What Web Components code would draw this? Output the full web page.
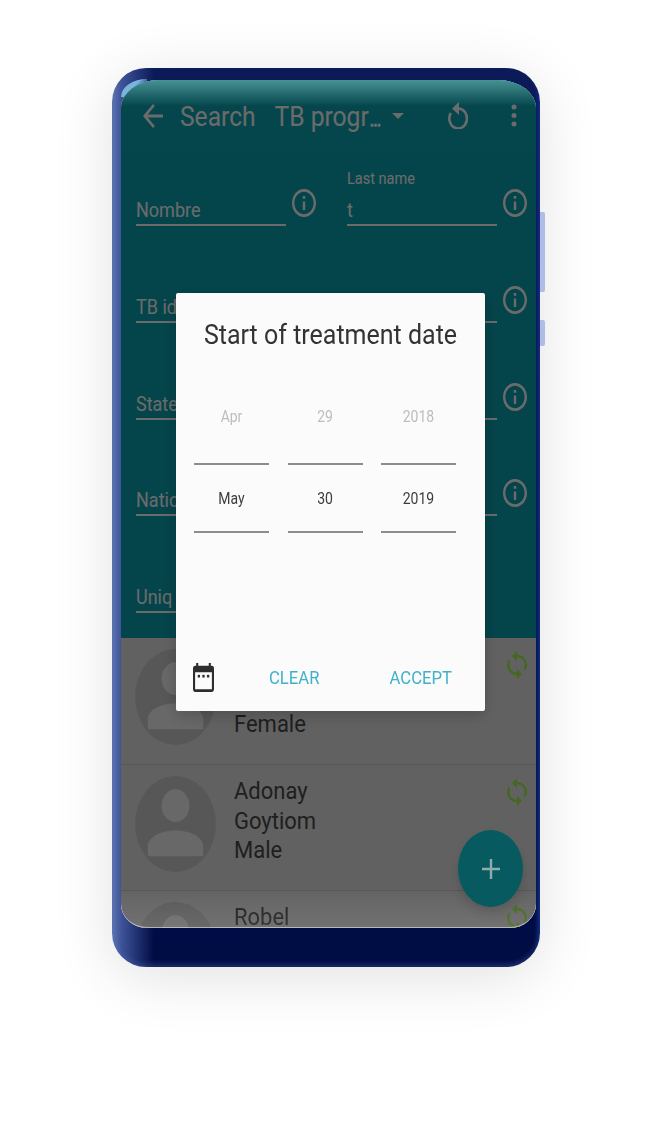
<!DOCTYPE html>
<html>
<head>
<meta charset="utf-8">
<style>
  html, body { margin: 0; background: #fff; }
  body { font-family: Roboto, "Liberation Sans", sans-serif; width: 657px; height: 1125px; overflow: hidden; }
</style>
</head>
<body>
<phone-frame>
  <app-bar></app-bar>
  <search-form>
    <form-field label="Nombre"></form-field>
    <form-field label="Last name" value="t"></form-field>
    <form-field label="TB id" no-info></form-field>
    <form-field></form-field>
    <form-field label="State" no-info></form-field>
    <form-field></form-field>
    <form-field label="Natio" no-info></form-field>
    <form-field></form-field>
    <form-field label="Uniq" no-info></form-field>
  </search-form>
  <patient-list>
    <patient-row lines="&nbsp;|&nbsp;|Female"></patient-row>
    <patient-row lines="Adonay|Goytiom|Male"></patient-row>
    <patient-row lines="Robel"></patient-row>
  </patient-list>
  <add-fab slot="over"></add-fab>
  <date-dialog slot="over" title="Start of treatment date"></date-dialog>
</phone-frame>

<script>
// material icons, stretched: the whole reference is a bit taller than wide
const infoIcon = `<svg viewBox="2 2 20 20" width="24" height="28" preserveAspectRatio="none" fill="currentColor"><path d="M11 7h2v2h-2zm0 4h2v6h-2zm1-9C6.48 2 2 6.48 2 12s4.48 10 10 10 10-4.48 10-10S17.52 2 12 2zm0 18c-4.41 0-8-3.59-8-8s3.59-8 8-8 8 3.59 8 8-3.59 8-8 8z"/></svg>`;

class PhoneFrame extends HTMLElement {
  connectedCallback() {
    this.attachShadow({ mode: 'open' });
    this.shadowRoot.innerHTML = `
      <style>
        :host {
          display: block;
          position: relative;
          box-sizing: border-box;
          width: 428px;
          height: 899px;
          margin: 68px 0 0 112px;
          padding: 12px 4px 39px 9px;
          border-radius: 34px;
          background:
            linear-gradient(90deg, #6076b2 0, #3f5499 9px, rgba(20,40,110,0) 42px),
            linear-gradient(270deg, #0b2070 0, rgba(11,32,112,0) 6px),
            linear-gradient(180deg, #0c1a58 0, #001150 50%, #000c44 100%);
          box-shadow: 0 10px 60px rgba(0,0,0,.12), inset 0 -3px 5px rgba(80,110,190,.35);
        }
        .btn { position: absolute; left: 428px; width: 5px; background: #aebce6; border-radius: 0 2px 2px 0; }
        .b1 { top: 144px; height: 80px; }
        .b2 { top: 252px; height: 26px; }
        .sliver { position: absolute; left: 9px; top: 11px; width: 26px; height: 18px; border-radius: 26px 0 0 0 / 18px 0 0 0; background: linear-gradient(135deg, #7ab4dc 45%, rgba(122,180,220,0) 75%); }
        .screen {
          position: relative;
          height: 100%;
          display: flex;
          flex-direction: column;
          overflow: hidden;
          border-radius: 38px 38px 26px 26px / 28px 28px 24px 24px;
          background: #fff;
          color: #fff;
          filter: blur(.5px);
        }
        .scrim { position: absolute; inset: 0; background: rgba(0,0,0,.58); pointer-events: none; }
        .gloss {
          position: absolute; left: 0; right: 0; top: 0; height: 26px;
          background: linear-gradient(180deg, rgba(140,220,220,.5), rgba(140,220,220,0));
        }
        .foot {
          position: absolute; left: 0; right: 0; bottom: 0; height: 40px;
          border-bottom: 1px solid rgba(255,255,255,.55);
          border-radius: 0 0 26px 26px / 0 0 24px 24px;
          background: linear-gradient(180deg, rgba(255,255,255,0), rgba(255,255,255,.1));
        }
      </style>
      <div class="btn b1"></div>
      <div class="btn b2"></div>
      <div class="sliver"></div>
      <div class="screen">
        <slot></slot>
        <div class="scrim"></div>
        <div class="gloss"></div>
        <div class="foot"></div>
        <slot name="over"></slot>
      </div>
    `;
  }
}

class AppBar extends HTMLElement {
  connectedCallback() {
    this.attachShadow({ mode: 'open' });
    this.shadowRoot.innerHTML = `
      <style>
        :host {
          display: flex;
          align-items: center;
          height: 72px;
          padding: 0 0 0 22px;
          font-size: 24.600px;
          color: #fff;
          background: #0ba8b4;
          flex: none;
        }
        svg { display: block; flex: none; }
        span { display: inline-block; transform: scaleY(1.12); }
        .title { margin-left: 17px; }
        .prog { margin-left: 19px; white-space: nowrap; }
        .dots { letter-spacing: -3px; }
        .caret { margin-left: 13px; width: 0; height: 0; border: 6px solid transparent; border-top: 6px solid #fff; border-bottom: 0; transform: none; }
        .refresh { margin-left: 44px; margin-top: -1px; }
        .more { margin-left: 43px; }
      </style>
      <svg width="20" height="24" viewBox="4 4 16 16" preserveAspectRatio="none" fill="currentColor"><path d="M20 11H7.830l5.590-5.590L12 4l-8 8 8 8 1.410-1.410L7.830 13H20v-2z"/></svg>
      <span class="title">Search</span>
      <span class="prog">TB progr<span class="dots">...</span></span>
      <span class="caret"></span>
      <svg class="refresh" width="20" height="27" viewBox="0 0 20 27"><path d="M10 6.500A8.800 10 0 1 1 2.800 11" fill="none" stroke="currentColor" stroke-width="2.600"/><path d="M11 0 4 6.500 11 13Z" fill="currentColor"/></svg>
      <svg class="more" width="6" height="24" viewBox="0 0 6 24" fill="currentColor"><circle cx="3" cy="3" r="2.500"/><circle cx="3" cy="11.500" r="2.500"/><circle cx="3" cy="20" r="2.500"/></svg>
    `;
  }
}

class SearchForm extends HTMLElement {
  connectedCallback() {
    this.attachShadow({ mode: 'open' });
    this.shadowRoot.innerHTML = `
      <style>
        :host {
          display: grid;
          grid-template-columns: 150px 150px;
          grid-auto-rows: 96.750px;
          column-gap: 61px;
          align-content: start;
          flex: none;
          height: 486px;
          padding-left: 15px;
          background: #0ba4b2;
          box-sizing: border-box;
        }
      </style>
      <slot></slot>
    `;
  }
}

class FormField extends HTMLElement {
  connectedCallback() {
    const label = this.getAttribute('label');
    const value = this.getAttribute('value');
    this.attachShadow({ mode: 'open' });
    this.shadowRoot.innerHTML = `
      <style>
        :host { display: flex; flex-direction: column; justify-content: flex-end; position: relative; height: 74px; color: #fff; }
        .float { font-size: 14.500px; line-height: 18px; position: absolute; top: 19px; left: 0; transform: scaleY(1.12); transform-origin: left center; }
        .input { font-size: 18px; line-height: 24px; height: 26px; border-bottom: 2px solid #fff; }
        .input span { display: inline-block; transform: scaleY(1.12); }
        .info { position: absolute; left: 156px; top: 37px; }
        svg { display: block; }
      </style>
      ${value ? `<div class="float">${label}</div>` : ''}
      <div class="input"><span>${value || label || ''}</span></div>
      ${this.hasAttribute('no-info') ? '' : `<div class="info">${infoIcon}</div>`}
    `;
  }
}

class PatientList extends HTMLElement {
  connectedCallback() {
    this.attachShadow({ mode: 'open' });
    this.shadowRoot.innerHTML = `
      <style>
        :host { display: block; flex: 1; min-height: 0; overflow: hidden; background: #e8e8e8; }
      </style>
      <slot></slot>
    `;
  }
}

class PatientRow extends HTMLElement {
  connectedCallback() {
    const lines = this.getAttribute('lines').split('|');
    this.attachShadow({ mode: 'open' });
    this.shadowRoot.innerHTML = `
      <style>
        :host {
          display: flex;
          box-sizing: border-box;
          height: 126.500px;
          padding: 11px 9px 0 14px;
          border-bottom: 1px solid #cecece;
          color: #4a4a4a;
        }
        .avatar { flex: none; display: block; }
        .text { margin-left: 18px; flex: 1; display: flex; flex-direction: column; gap: 10.800px; padding-top: 5.400px; font-size: 22px; line-height: 19px; }
        .text div { transform: scaleY(1.12); transform-origin: left center; }
        .sync { flex: none; margin-top: 2px; color: #a6f54a; }
      </style>
      <svg class="avatar" width="81" height="96" viewBox="0 0 82 97" preserveAspectRatio="none">
        <ellipse cx="41" cy="48.500" rx="41" ry="48.500" fill="#d0d0d0"/>
        <ellipse cx="41" cy="30" rx="14" ry="16.500" fill="#f8f8f8"/>
        <path d="M13 81V71c0-10 14-16 28-16s28 6 28 16v10c-8 0-48 0-56 0Z" fill="#f8f8f8"/>
      </svg>
      <div class="text">${lines.map(l => `<div>${l}</div>`).join('')}</div>
      <svg class="sync" width="20" height="28" viewBox="4 1 16 22" preserveAspectRatio="none" fill="currentColor"><path d="M12 4V1L8 5l4 4V6c3.310 0 6 2.690 6 6 0 1.010-.25 1.970-.7 2.800l1.460 1.460C19.540 15.030 20 13.570 20 12c0-4.420-3.580-8-8-8zm0 14c-3.310 0-6-2.690-6-6 0-1.010.25-1.970.7-2.800L5.240 7.740C4.460 8.970 4 10.430 4 12c0 4.420 3.580 8 8 8v3l4-4-4-4v3z"/></svg>
    `;
  }
}

class AddFab extends HTMLElement {
  connectedCallback() {
    this.attachShadow({ mode: 'open' });
    this.shadowRoot.innerHTML = `
      <style>
        :host {
          position: absolute;
          left: 337px;
          top: 750px;
          width: 65px;
          height: 77px;
          border-radius: 50%;
          display: flex;
          align-items: center;
          justify-content: center;
          background: #065a60;
          box-shadow: 0 5px 12px rgba(0,0,0,.16);
        }
        svg { display: block; }
      </style>
      <svg width="18" height="20" viewBox="0 0 18 20" stroke="#8fabad" stroke-width="2.400"><path d="M9 0v20M0 10h18"/></svg>
    `;
  }
}

class DateWheel extends HTMLElement {
  connectedCallback() {
    const prev = this.getAttribute('prev');
    const cur = this.getAttribute('cur');
    this.attachShadow({ mode: 'open' });
    this.shadowRoot.innerHTML = `
      <style>
        :host { display: block; width: 75px; font-size: 14px; text-align: center; }
        .row { display: flex; align-items: center; justify-content: center; border-bottom: 2px solid #8c8c8c; box-sizing: border-box; }
        .row span { display: inline-block; transform: scaleY(1.15); }
        .prev { height: 88px; color: #bdbdbd; padding-bottom: 8px; }
        .cur { height: 68px; color: #3d3d3d; }
      </style>
      <div class="row prev"><span>${prev}</span></div>
      <div class="row cur"><span>${cur}</span></div>
    `;
  }
}
customElements.define('date-wheel', DateWheel);

class DateDialog extends HTMLElement {
  connectedCallback() {
    this.attachShadow({ mode: 'open' });
    this.shadowRoot.innerHTML = `
      <style>
        :host {
          position: absolute;
          left: 55px;
          top: 213px;
          width: 309px;
          height: 418px;
          box-sizing: border-box;
          display: flex;
          flex-direction: column;
          background: #fbfbfb;
          border-radius: 2px;
          box-shadow: 0 5px 16px rgba(0,0,0,.2);
          color: #333;
        }
        h2 { margin: 0; padding-top: 25px; height: 52px; font-weight: 400; font-size: 25px; line-height: 34px; text-align: center; transform: scaleY(1.1); transform-origin: center 42px; }
        .wheels { display: flex; gap: 18.500px; padding: 7px 0 0 18px; }
        .actions { margin-top: auto; height: 68px; display: flex; align-items: center; padding: 0 33px 0 17px; color: #3fb2c9; font-size: 16.700px; }
        .actions svg { display: block; flex: none; color: #2d2d2d; }
        .actions span { display: inline-block; transform: scaleY(1.15); }
        .clear { margin-left: 55px; }
        .accept { margin-left: auto; }
      </style>
      <h2>${this.getAttribute('title')}</h2>
      <div class="wheels">
        <date-wheel prev="Apr" cur="May"></date-wheel>
        <date-wheel prev="29" cur="30"></date-wheel>
        <date-wheel prev="2018" cur="2019"></date-wheel>
      </div>
      <div class="actions">
        <svg width="21" height="29" viewBox="2 1 20 22" preserveAspectRatio="none" fill="currentColor"><path d="M20 3h-1V1h-2v2H7V1H5v2H4c-1.100 0-2 .9-2 2v16c0 1.100.9 2 2 2h16c1.100 0 2-.9 2-2V5c0-1.100-.9-2-2-2zm0 18H4V8h16v13z"/><rect x="6.500" y="10" width="2.200" height="2"/><rect x="10.900" y="10" width="2.200" height="2"/><rect x="15.300" y="10" width="2.200" height="2"/></svg>
        <span class="clear">CLEAR</span>
        <span class="accept">ACCEPT</span>
      </div>
    `;
  }
}

customElements.define('phone-frame', PhoneFrame);
customElements.define('app-bar', AppBar);
customElements.define('search-form', SearchForm);
customElements.define('form-field', FormField);
customElements.define('patient-list', PatientList);
customElements.define('patient-row', PatientRow);
customElements.define('add-fab', AddFab);
customElements.define('date-dialog', DateDialog);
</script>
</body>
</html>
